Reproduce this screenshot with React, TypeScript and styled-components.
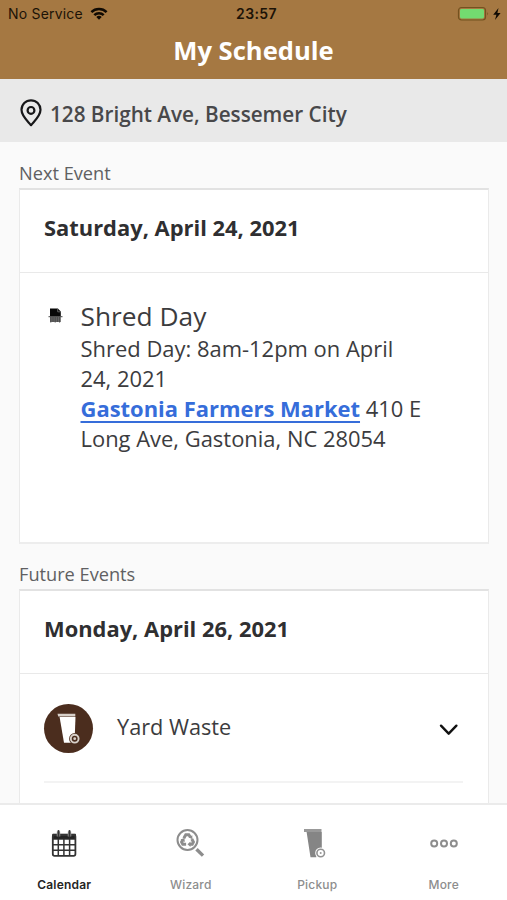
import React from "react";
import styled, { createGlobalStyle } from "styled-components";

const GlobalStyle = createGlobalStyle`
  * { box-sizing: border-box; }
  body { margin: 0; background: #fafafa; font-family: "Open Sans", sans-serif; color: #3c3c3e; }
`;
const Screen = styled.div`
  width: 507px;
  height: 900px;
  display: flex;
  flex-direction: column;
  overflow: hidden;
  background: #fafafa;
`;
const Header = styled.header`
  flex: 0 0 79px;
  background: #a57842;
`;
const StatusBar = styled.div`
  height: 28px;
  display: grid;
  grid-template-columns: 1fr auto 1fr;
  align-items: center;
  padding: 0 5px 0 8px;
  font: 400 14px/28px Inter, sans-serif;
  color: #1c1307;
`;
const Carrier = styled.div`
  display: flex;
  align-items: center;
  gap: 7px;
  letter-spacing: 0.2px;
`;
const Clock = styled.div`
  padding-left: 3px;
  font-weight: 600;
  letter-spacing: 0.4px;
`;
const Power = styled.div`
  display: flex;
  justify-content: flex-end;
`;
const Title = styled.h1`
  margin: 0;
  text-align: center;
  font-size: 25.6px;
  line-height: 46px;
  font-weight: 700;
  color: #fff;
`;
const AddressBar = styled.div`
  flex: 0 0 63px;
  display: flex;
  align-items: center;
  gap: 8px;
  padding: 6px 0 0 20px;
  background: #e9e9e9;
  font-size: 20.7px;
  font-weight: 600;
  color: #48484a;
  svg { margin-top: -2px; }
`;
const Content = styled.main`
  flex: 1;
  min-height: 0;
  overflow: hidden;
  padding: 16px 18px 0 19px;
`;
const SectionLabel = styled.h2`
  margin: 0;
  height: 30px;
  font-size: 18.2px;
  font-weight: 400;
  line-height: 30px;
  color: #606062;
`;
const Card = styled.section<{ $height: number }>`
  height: ${(p) => p.$height}px;
  margin-bottom: 15px;
  background: #fff;
  border: 1px solid #eaeaea;
  border-top: 2px solid #e2e2e2;
  border-bottom: 2px solid #ededed;
`;
const CardDate = styled.h3`
  margin: 0;
  height: 83px;
  padding-left: 24px;
  border-bottom: 1px solid #e9e9e9;
  font-size: 21.9px;
  font-weight: 700;
  line-height: 75px;
  color: #2f2f31;
`;
const EventRow = styled.div`
  display: flex;
  gap: 17.5px;
  padding: 26px 50px 0 28px;
`;
const EventIcon = styled.div`
  width: 15px;
  padding-top: 8px;
`;
const EventTitle = styled.div`
  font-size: 26.3px;
  line-height: 35px;
`;
const EventText = styled.p`
  margin: 0;
  font-size: 21.95px;
  line-height: 30px;
  white-space: nowrap;
`;
const PlaceLink = styled.a`
  color: #366dda;
  font-weight: 700;
  text-decoration: underline;
  text-decoration-thickness: 1.5px;
  text-underline-offset: 4px;
  text-decoration-skip-ink: none;
`;
const PickupRow = styled.div`
  height: 109px;
  margin: 0 25px 0 24px;
  padding-top: 2px;
  display: flex;
  align-items: center;
  border-bottom: 2px solid #f3f3f3;
`;
const Badge = styled.div`
  width: 49px;
  height: 49px;
  border-radius: 50%;
  display: flex;
  background: #4b2d1e;
`;
const PickupName = styled.div`
  flex: 1;
  padding: 0 0 4px 24px;
  font-size: 21.7px;
`;
const TabBar = styled.nav`
  flex: 0 0 97px;
  display: grid;
  grid-template-columns: repeat(4, 1fr);
  padding-left: 1px;
  border-top: 2px solid #ebebeb;
  background: #fff;
`;
const Tab = styled.div<{ $active?: boolean }>`
  display: flex;
  flex-direction: column;
  align-items: center;
  padding-top: 21px;
  color: ${(p) => (p.$active ? "#252525" : "#8d8d8d")};
  svg { height: 36px; }
`;
const TabLabel = styled.span<{ $active?: boolean }>`
  margin-top: 15px;
  font: ${(p) => (p.$active ? 600 : 500)} 12px/16px Inter, sans-serif;
  letter-spacing: 0.2px;
`;

const Wifi = () => (
  <svg width="18" height="14" viewBox="0 0 18 14" fill="none" stroke="#100a03" strokeWidth="2.5">
    <path d="M1.4 5.2a10.8 10.8 0 0 1 15.2 0M4.3 8.2a6.7 6.7 0 0 1 9.4 0" />
    <path d="M9 12.8 6.3 10a3.9 3.9 0 0 1 5.4 0z" fill="#100a03" stroke="none" />
  </svg>
);
const Battery = () => (
  <svg width="45" height="16" viewBox="0 0 45 16">
    <rect x="1.5" y="1.5" width="27" height="12.5" rx="3" fill="none" stroke="#73521f" strokeWidth="1.2" />
    <rect x="3" y="3" width="24" height="9.5" rx="1.4" fill="#73db70" />
    <path d="M30.3 6q1.8 1.7 0 3.6z" fill="#73521f" />
    <path d="M41.5 2 36.2 8.8h3.2L38 14l5.6-7h-3.2z" fill="#100a03" />
  </svg>
);
const Pin = () => (
  <svg width="22" height="28" viewBox="0 0 22 28" fill="none" stroke="#171719" strokeWidth="2.2" strokeLinejoin="round">
    <path d="M11 26.2C8 22.4 1.5 17.2 1.5 10.8a9.5 9.5 0 0 1 19 0c0 6.4-6.5 11.6-9.5 15.4z" />
    <circle cx="11" cy="11.4" r="3.4" />
  </svg>
);
const Shredder = () => (
  <svg width="15" height="16" viewBox="0 0 15 16">
    <path d="M2 .5h7.8l3 3v5H2z" fill="#070707" />
    <path d="M9.7.8v3h3" fill="none" stroke="#777" strokeWidth=".8" />
    <path d="M.5 8.2h14v1H.5z" fill="#444" />
    <path d="M2 9h10.8v5H2z" fill="#666" />
    <path d="M2.8 9v5.5M5 9v5M7.2 9v5.5M9.4 9v5M11.6 9v5.5" stroke="#4b4b4b" />
  </svg>
);
const BadgeBin = () => (
  <svg width="49" height="49" viewBox="0 0 49 49">
    <path d="M15.6 13h15.9l-1 25.7H20z" fill="#fff" />
    <path d="M13.5 9.7h17.8v2.7H14.2z" fill="#d8d0c9" />
    <circle cx="30.7" cy="34.7" r="5.6" fill="#4b2d1e" />
    <circle cx="30.7" cy="34.7" r="3.9" fill="none" stroke="#d8d0c9" strokeWidth="1.9" />
    <circle cx="30.7" cy="34.7" r="1.4" fill="#d8d0c9" />
  </svg>
);
const Chevron = () => (
  <svg width="28" height="24" viewBox="0 0 28 24" fill="none" stroke="#111" strokeWidth="2.4" strokeLinecap="round" strokeLinejoin="round">
    <path d="m6 8.7 7.7 8 7.7-8" />
  </svg>
);
const CalendarIcon = () => (
  <svg width="30" height="36" viewBox="0 0 30 36" fill="none" stroke="#333">
    <path d="M3.7 8.2h22.8v5H3.7z" fill="#222" />
    <rect x="3.8" y="9" width="22.6" height="20.8" rx="1.8" strokeWidth="1.8" />
    <path d="M9.3 13v16M14.9 13v16M20.6 13v16M4 18.7h22M4 24.2h22" strokeWidth="1.5" />
    <path d="M9.5 5.5v5M20.5 5.5v5" stroke="#aaa" strokeWidth="3.4" />
    <path d="M9.5 5v5.5M20.5 5v5.5" strokeWidth="2" strokeLinecap="round" />
  </svg>
);
const WizardIcon = () => (
  <svg width="32" height="36" viewBox="0.7 0 32 36" fill="none" stroke="currentColor">
    <circle cx="13.2" cy="14" r="10" strokeWidth="2" />
    <path d="m22.2 23.3 6.5 6.3" strokeWidth="3.4" />
    <g strokeWidth="3">
      <path d="m9.5 12.2 2-3.5h3l1.6 2.5" />
      <path d="m17.5 13 1.6 3-1.2 2.3h-2.6" />
      <path d="M11.8 18.3H8.5l-1.2-2.3 1.3-2.3" />
    </g>
    <g fill="currentColor" stroke="none">
      <path d="m18 9.2.1 4-3.7-1.8z" />
      <path d="m16.2 15.4-3 2.9 3 2.7z" />
      <path d="m6.2 13.4 3.9-1.3.4 4z" />
    </g>
  </svg>
);
const BinIcon = () => (
  <svg width="30" height="36" viewBox="0 0 30 36">
    <path d="M4.6 6h15.2v20h-4.3l-1.2 5.2H8.5z" fill="#858585" />
    <path d="M2 3h17.5v3H2z" fill="#999" />
    <circle cx="18.7" cy="27" r="5.5" fill="#fff" />
    <circle cx="18.7" cy="27" r="3.8" fill="none" stroke="#929292" strokeWidth="1.6" />
    <circle cx="18.7" cy="27" r="1" fill="#999" />
  </svg>
);
const MoreIcon = () => (
  <svg width="30" height="36" viewBox="0 0 30 36" fill="none" stroke="currentColor" strokeWidth="2">
    <circle cx="5.2" cy="17.4" r="3" />
    <circle cx="15" cy="17.4" r="3" />
    <circle cx="24.8" cy="17.4" r="3" />
  </svg>
);

const tabs = [
  { label: "Calendar", Icon: CalendarIcon, active: true },
  { label: "Wizard", Icon: WizardIcon },
  { label: "Pickup", Icon: BinIcon },
  { label: "More", Icon: MoreIcon },
];

export default function App() {
  return (
    <Screen>
      <GlobalStyle />
      <Header>
        <StatusBar>
          <Carrier>No Service <Wifi /></Carrier>
          <Clock>23:57</Clock>
          <Power><Battery /></Power>
        </StatusBar>
        <Title>My Schedule</Title>
      </Header>
      <AddressBar><Pin />128 Bright Ave, Bessemer City</AddressBar>
      <Content>
        <SectionLabel>Next Event</SectionLabel>
        <Card $height={356}>
          <CardDate>Saturday, April 24, 2021</CardDate>
          <EventRow>
            <EventIcon><Shredder /></EventIcon>
            <div>
              <EventTitle>Shred Day</EventTitle>
              <EventText>
                Shred Day: 8am-12pm on April<br />24, 2021<br />
                <PlaceLink>Gastonia Farmers Market</PlaceLink> 410 E<br />
                Long Ave, Gastonia, NC 28054
              </EventText>
            </div>
          </EventRow>
        </Card>
        <SectionLabel>Future Events</SectionLabel>
        <Card $height={300}>
          <CardDate>Monday, April 26, 2021</CardDate>
          <PickupRow>
            <Badge><BadgeBin /></Badge>
            <PickupName>Yard Waste</PickupName>
            <Chevron />
          </PickupRow>
          <PickupRow />
        </Card>
      </Content>
      <TabBar>
        {tabs.map(({ label, Icon, active }) => (
          <Tab key={label} $active={active}>
            <Icon />
            <TabLabel $active={active}>{label}</TabLabel>
          </Tab>
        ))}
      </TabBar>
    </Screen>
  );
}
